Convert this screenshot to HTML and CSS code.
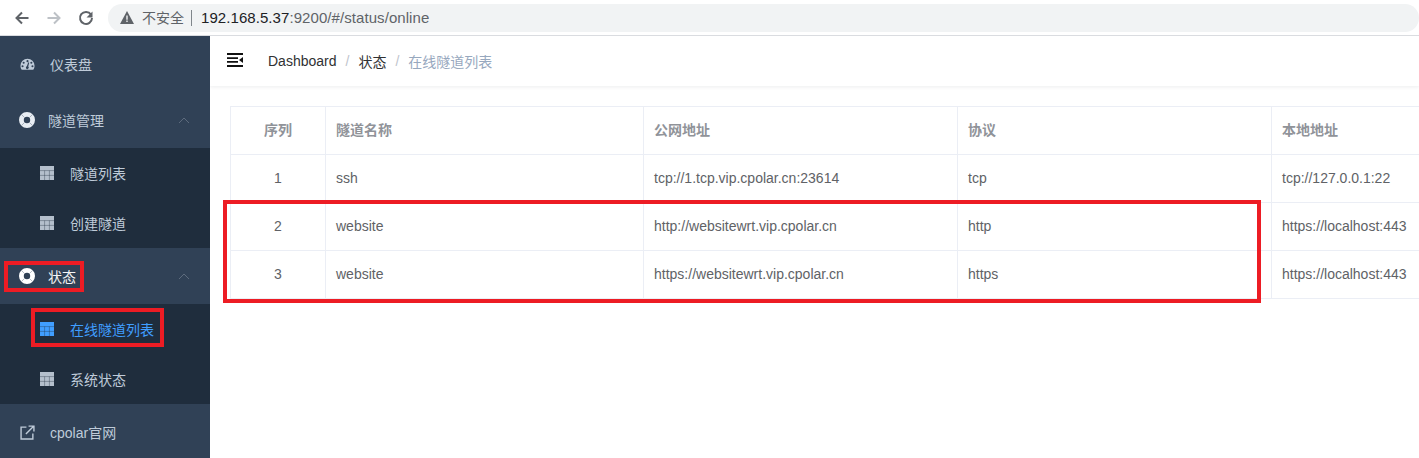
FILE: index.html
```html
<!DOCTYPE html>
<html lang="zh-CN">
<head>
<meta charset="utf-8">
<title>cpolar</title>
<link rel="stylesheet" href="styles.css">
</head>
<body>
<div class="toolbar">
  <svg class="nav-icon" viewBox="0 0 16 16"><path d="M14.500 8H2.500M8 2.500 2.500 8 8 13.500" fill="none" stroke="#5f6368" stroke-width="2"/></svg>
  <svg class="nav-icon" viewBox="0 0 16 16"><path d="M1.500 8h12M8 2.500 13.500 8 8 13.500" fill="none" stroke="#bdc1c6" stroke-width="2"/></svg>
  <svg class="nav-icon" viewBox="0 0 16 16"><path d="M13 4.600A6 6 0 1 0 14 8" fill="none" stroke="#5f6368" stroke-width="2"/><path d="M14.500 1.500v6h-6z" fill="#5f6368"/></svg>
  <div class="omnibox">
    <svg class="warn" viewBox="0 0 14 13"><path d="M7 0 14 13H0z" fill="#5f6368"/><path d="M6.300 4.500h1.400v4.300H6.300zM6.300 9.600h1.400v1.400H6.300z" fill="#f1f3f4"/></svg>
    <span class="insecure">不安全</span>
    <span class="url"><span class="host">192.168.5.37</span>:9200/#/status/online</span>
  </div>
</div>
<div class="app">
  <aside class="sidebar">
    <a class="item"><svg class="ico" viewBox="0 0 16 16"><use href="#gauge"/></svg><span>仪表盘</span></a>
    <a class="item"><svg class="ring" viewBox="0 0 16 16"><use href="#ring"/></svg><span>隧道管理</span><svg class="chev" viewBox="0 0 12 7"><path d="M1 6 6 1l5 5" fill="none" stroke="#5d6b7d" stroke-width="1"/></svg></a>
    <div class="sub">
      <a class="subitem"><svg class="tbl" viewBox="0 0 14 14"><use href="#table"/></svg><span>隧道列表</span></a>
      <a class="subitem"><svg class="tbl" viewBox="0 0 14 14"><use href="#table"/></svg><span>创建隧道</span></a>
    </div>
    <a class="item active"><svg class="ring" viewBox="0 0 16 16"><use href="#ring"/></svg><span>状态</span><svg class="chev" viewBox="0 0 12 7"><path d="M1 6 6 1l5 5" fill="none" stroke="#5d6b7d" stroke-width="1"/></svg></a>
    <div class="sub">
      <a class="subitem current"><svg class="tbl" viewBox="0 0 14 14"><use href="#table"/></svg><span>在线隧道列表</span></a>
      <a class="subitem"><svg class="tbl" viewBox="0 0 14 14"><use href="#table"/></svg><span>系统状态</span></a>
    </div>
    <a class="item"><svg class="ico" viewBox="0 0 14 14"><path d="M6 2H1v11h11V8" fill="none" stroke="currentColor" stroke-width="1.300"/><path d="M5.500 8.500 12.500 1.500M8 1h5v5" fill="none" stroke="currentColor" stroke-width="1.300"/></svg><span>cpolar官网</span></a>
  </aside>
  <main class="content">
    <header class="navbar">
      <svg class="hamburger" viewBox="0 0 16 14"><path d="M0 1h16M0 13h16M0 5.200h11M0 8.800h11" stroke="#111" stroke-width="1.800" fill="none"/><path d="M16 4v6L12 7z" fill="#111"/></svg>
      <nav class="crumbs">
        <span class="crumb">Dashboard</span><span class="sep">/</span><span class="crumb">状态</span><span class="sep">/</span><span class="crumb end">在线隧道列表</span>
      </nav>
    </header>
    <div class="table-wrap">
      <table class="grid">
        <colgroup><col class="c1"><col class="c2"><col class="c3"><col class="c4"><col class="c5"></colgroup>
        <thead><tr><th class="center">序列</th><th>隧道名称</th><th>公网地址</th><th>协议</th><th>本地地址</th></tr></thead>
        <tbody>
          <tr><td class="center">1</td><td>ssh</td><td>tcp://1.tcp.vip.cpolar.cn:23614</td><td>tcp</td><td>tcp://127.0.0.1:22</td></tr>
          <tr><td class="center">2</td><td>website</td><td>http://websitewrt.vip.cpolar.cn</td><td>http</td><td>https://localhost:443</td></tr>
          <tr><td class="center">3</td><td>website</td><td>https://websitewrt.vip.cpolar.cn</td><td>https</td><td>https://localhost:443</td></tr>
        </tbody>
      </table>
    </div>
  </main>
</div>
<div class="mark mark-rows"></div>
<div class="mark mark-status"></div>
<div class="mark mark-online"></div>
<svg class="defs" width="0" height="0">
  <defs>
    <g id="gauge"><path fill="currentColor" fill-rule="evenodd" d="M8 1.800a7.500 7.500 0 0 0-7.500 7.500c0 1.700.5 3.100 1.400 4.400h12.200c.9-1.300 1.400-2.700 1.400-4.400A7.500 7.500 0 0 0 8 1.800zM8 3.300a1.100 1.100 0 1 1 0 2.200 1.100 1.100 0 0 1 0-2.200zM3.900 5a1.100 1.100 0 1 1 0 2.200 1.100 1.100 0 0 1 0-2.200zM12.100 5a1.100 1.100 0 1 1 0 2.200 1.100 1.100 0 0 1 0-2.200zM2.700 8.800a1.100 1.100 0 1 1 0 2.200 1.100 1.100 0 0 1 0-2.200zM13.300 8.800a1.100 1.100 0 1 1 0 2.200 1.100 1.100 0 0 1 0-2.200zM9.800 6 8.800 10.200a1.500 1.500 0 1 1-1.500-.3L8.800 5.700z"/></g>
    <g id="ring"><circle cx="8" cy="8" r="5.600" fill="none" stroke="currentColor" stroke-width="4.800"/><path d="M2.300 2.300 5.300 5.300M13.700 2.300 10.700 5.300M2.300 13.700 5.300 10.700M13.700 13.700 10.700 10.700" stroke="#304156" stroke-opacity=".4" stroke-width=".9"/></g>
    <g id="table"><path fill="currentColor" d="M0 0h14v14H0z"/><path d="M0 4.600h14M0 9.400h14M4.600 4.600V14M9.400 4.600V14" stroke="#1f2d3d" stroke-opacity=".45" stroke-width=".8" fill="none"/></g>
  </defs>
</svg>
</body>
</html>
```
FILE: styles.css
```css
* { box-sizing: border-box; }
html, body { margin: 0; height: 100%; overflow: hidden; background: #fff; }
body { font-family: "Liberation Sans", "Noto Sans CJK SC", sans-serif; font-size: 14px; width: 1419px; height: 458px; position: relative; }

.toolbar { height: 36px; display: flex; align-items: center; padding-left: 14px; background: #fff; border-bottom: 1px solid #dadce0; }
.nav-icon { width: 16px; height: 16px; margin-right: 16px; flex: none; }
.omnibox { margin-left: -2px; width: 1311px; height: 28px; border-radius: 14px; background: #f1f3f4; display: flex; align-items: center; padding-left: 12px; }
.warn { width: 14px; height: 13px; margin-right: 8px; flex: none; }
.insecure { font-size: 14px; color: #5f6368; padding-right: 7px; border-right: 1px solid #80868b; line-height: 16px; }
.url { margin-left: 9px; font-size: 15px; color: #5f6368; letter-spacing: .07px; }
.host { color: #202124; }

.app { display: flex; height: 422px; }
.sidebar { width: 210px; flex: none; background: #304156; color: #bfcbd9; display: flex; flex-direction: column; overflow: hidden; }
.item { height: 56px; display: flex; align-items: center; padding-left: 20px; flex: none; }
.ico { width: 15px; height: 15px; flex: none; margin-right: 15px; }
.ring { width: 16px; height: 16px; flex: none; color: #e8edf3; margin: 0 13px 0 -1px; }
.chev { width: 12px; height: 7px; margin-left: auto; margin-right: 20px; }
.active { color: #f4f4f5; }
.active .ring { color: #fff; }
.sub { background: #1f2d3d; display: flex; flex-direction: column; flex: none; }
.subitem { height: 50px; display: flex; align-items: center; padding-left: 40px; }
.tbl { width: 14px; height: 14px; margin-right: 16px; flex: none; color: #b4bfcc; }
.current { color: #409eff; }
.current .tbl { color: #409eff; }

.content { flex: 1; min-width: 0; overflow: hidden; }
.navbar { height: 50px; display: flex; align-items: center; padding-left: 17px; box-shadow: 0 1px 4px rgba(0, 21, 41, .08); }
.hamburger { width: 16px; height: 14px; flex: none; margin-top: -2px; }
.crumbs { margin-left: 25px; display: flex; align-items: center; color: #303133; }
.sep { color: #c0c4cc; margin: 0 9px; }
.end { color: #97a8be; }

.table-wrap { padding: 20px 0 0 20px; }
.grid { table-layout: fixed; border-collapse: collapse; width: 1240px; border: 1px solid #ebeef5; color: #606266; }
.c1 { width: 95px; }
.c2 { width: 318px; }
.c3 { width: 314px; }
.c4 { width: 314px; }
.c5 { width: 199px; }
.grid th, .grid td { height: 48px; padding: 0 10px; text-align: left; border: 1px solid #ebeef5; font-size: 14px; line-height: 23px; white-space: nowrap; }
.grid th { color: #909399; font-weight: 700; }
.grid .center { text-align: center; }

.mark { position: absolute; border: 4px solid #ed1c24; }
.mark-rows { left: 223px; top: 200px; width: 1038px; height: 103px; }
.mark-status { left: 4px; top: 261px; width: 80px; height: 31px; }
.mark-online { left: 31px; top: 308px; width: 133px; height: 39px; }
.defs { position: absolute; }
```
